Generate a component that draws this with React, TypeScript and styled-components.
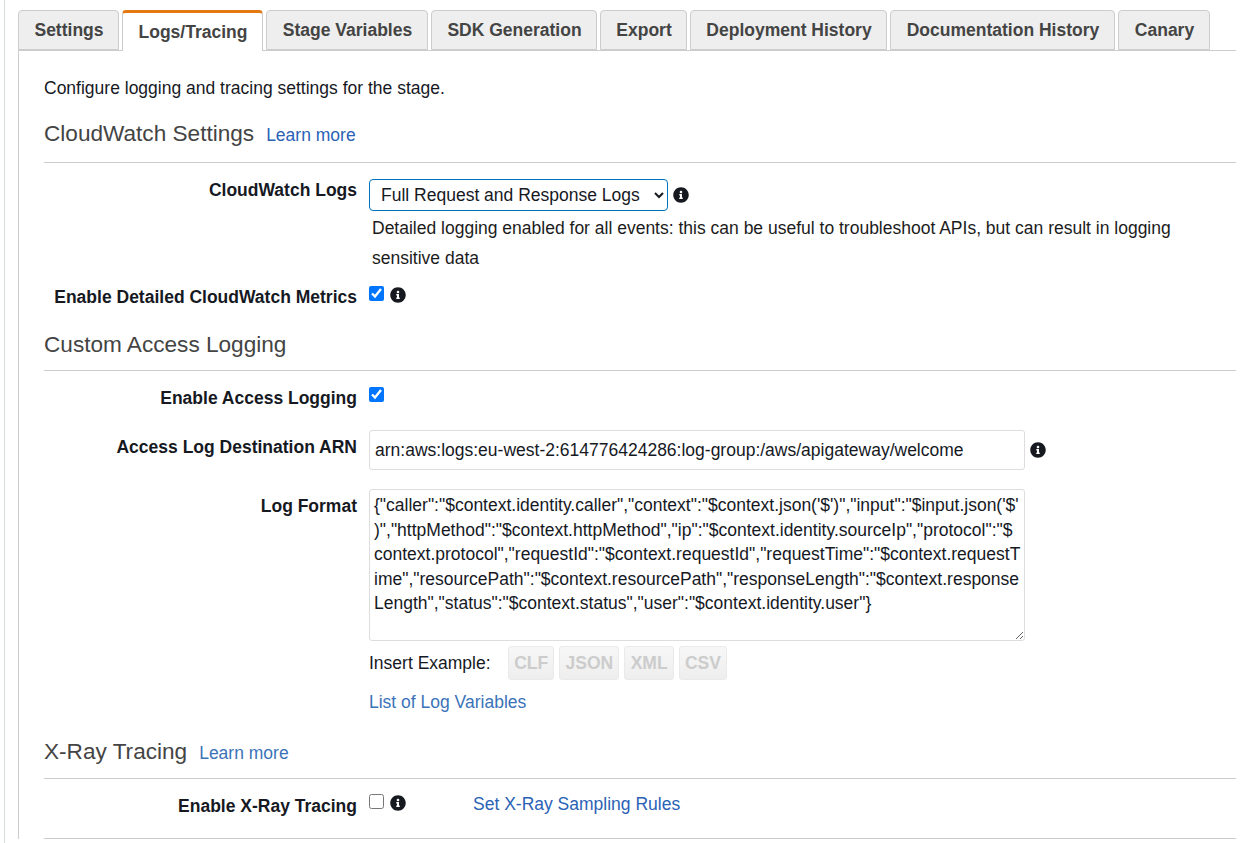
import styled, { createGlobalStyle } from "styled-components"
import { FaInfoCircle } from "react-icons/fa"

const TABS = [
   { label: "Settings", width: 101 },
   { label: "Logs/Tracing", width: 141, active: true },
   { label: "Stage Variables", width: 162 },
   { label: "SDK Generation", width: 166 },
   { label: "Export", width: 87 },
   { label: "Deployment History", width: 197 },
   { label: "Documentation History", width: 225 },
   { label: "Canary", width: 92 },
]

const LOG_FORMAT = `{"caller":"$context.identity.caller","context":"$context.json('$')","input":"$input.json('$')","httpMethod":"$context.httpMethod","ip":"$context.identity.sourceIp","protocol":"$context.protocol","requestId":"$context.requestId","requestTime":"$context.requestTime","resourcePath":"$context.resourcePath","responseLength":"$context.responseLength","status":"$context.status","user":"$context.identity.user"}`

export default function App() {
   return (
      <>
         <GlobalStyle />
         <Page>
            <TabBar>
               {TABS.map(tab => (
                  <Tab key={tab.label} $active={tab.active} $width={tab.width}>{tab.label}</Tab>
               ))}
            </TabBar>
            <Panel>
               <Intro>Configure logging and tracing settings for the stage.</Intro>

               <SectionTitle $top={21} $height={42}>
                  <Heading>CloudWatch Settings</Heading>
                  <LearnMore href="#">Learn more</LearnMore>
               </SectionTitle>
               <FormRow $top={16}>
                  <Label $top={0}>CloudWatch Logs</Label>
                  <Control>
                     <InlineGroup>
                        <LogSelect defaultValue="full">
                           <option value="full">Full Request and Response Logs</option>
                        </LogSelect>
                        <Info />
                     </InlineGroup>
                     <Hint>
                        Detailed logging enabled for all events: this can be useful to troubleshoot APIs, but can result in logging sensitive data
                     </Hint>
                  </Control>
               </FormRow>
               <FormRow $top={5}>
                  <Label $top={8}>Enable Detailed CloudWatch Metrics</Label>
                  <CheckGroup>
                     <Check type="checkbox" defaultChecked />
                     <CheckInfo />
                  </CheckGroup>
               </FormRow>

               <SectionTitle $top={23} $height={39}>
                  <Heading>Custom Access Logging</Heading>
               </SectionTitle>
               <FormRow $top={8}>
                  <Label $top={8}>Enable Access Logging</Label>
                  <CheckGroup>
                     <Check type="checkbox" defaultChecked />
                  </CheckGroup>
               </FormRow>
               <FormRow $top={21}>
                  <Label $top={6}>Access Log Destination ARN</Label>
                  <InlineGroup>
                     <ArnInput readOnly value="arn:aws:logs:eu-west-2:614776424286:log-group:/aws/apigateway/welcome" />
                     <Info />
                  </InlineGroup>
               </FormRow>
               <FormRow $top={19}>
                  <Label $top={6}>Log Format</Label>
                  <Control>
                     <FormatArea readOnly value={LOG_FORMAT} />
                     <ExampleRow>
                        <ExampleLabel>Insert Example:</ExampleLabel>
                        <ExampleButton disabled>CLF</ExampleButton>
                        <ExampleButton disabled>JSON</ExampleButton>
                        <ExampleButton disabled>XML</ExampleButton>
                        <ExampleButton disabled>CSV</ExampleButton>
                     </ExampleRow>
                     <VariablesLink href="#">List of Log Variables</VariablesLink>
                  </Control>
               </FormRow>

               <SectionTitle $top={25} $height={40}>
                  <Heading>X-Ray Tracing</Heading>
                  <LearnMore href="#" $soft>Learn more</LearnMore>
               </SectionTitle>
               <FormRow $top={7}>
                  <Label $top={9}>Enable X-Ray Tracing</Label>
                  <CheckGroup>
                     <Check type="checkbox" />
                     <CheckInfo />
                     <SamplingLink href="#">Set X-Ray Sampling Rules</SamplingLink>
                  </CheckGroup>
               </FormRow>
               <BottomRule />
            </Panel>
         </Page>
      </>
   )
}

const GlobalStyle = createGlobalStyle`
   html, body {
      margin: 0;
      height: 843px;
      overflow: hidden;
      background: #fff;
   }

   body {
      font-family: "Liberation Sans", Arial, sans-serif;
      font-size: 16px;
      color: #16191f;
   }
`

const Page = styled.div`
   width: 1244px;
   height: 843px;
   box-sizing: border-box;
   margin-left: 4px;
   padding: 10px 0 0 13px;
   border-left: 1px solid #d5dbdb;
   overflow: hidden;
`

const TabBar = styled.div`
   display: flex;
   gap: 3px;
   height: 41px;
   box-sizing: border-box;
   width: 1218px;
   border-bottom: 1px solid #ccc;
`

const Tab = styled.div<{ $active?: boolean, $width: number }>`
   width: ${({ $width }) => $width}px;
   height: ${({ $active }) => $active ? 41 : 40}px;
   box-sizing: border-box;
   display: flex;
   align-items: center;
   justify-content: center;
   padding-left: 1px;
   font-weight: 700;
   font-size: 17.5px;
   color: #444;
   border: 1px solid #ccc;
   border-bottom: ${({ $active }) => $active ? "none" : "1px solid #ccc"};
   border-top: ${({ $active }) => $active ? "3px solid #e47911" : "1px solid #ccc"};
   border-radius: 4px 4px 0 0;
   background: ${({ $active }) => $active ? "#fff" : "#eee"};
`

const Panel = styled.div`
   width: 1218px;
   box-sizing: border-box;
   padding: 26px 0 0 25px;
   border-left: 1px solid #ccc;
`

const Intro = styled.div`
   line-height: 22px;
   font-size: 17.5px;
`

const SectionTitle = styled.div<{ $top: number, $height: number }>`
   display: flex;
   align-items: baseline;
   gap: 12px;
   margin-top: ${({ $top }) => $top}px;
   height: ${({ $height }) => $height}px;
   border-bottom: 1px solid #ccc;
`

const Heading = styled.h3`
   margin: 0;
   font-weight: 400;
   font-size: 22.6px;
   line-height: 28px;
   color: #444;
`

const LearnMore = styled.a<{ $soft?: boolean }>`
   font-size: 17.5px;
   color: ${({ $soft }) => $soft ? "#3b73b9" : "#2a62b5"};
   text-decoration: none;
`

const FormRow = styled.div<{ $top: number }>`
   display: grid;
   grid-template-columns: 313px 1fr;
   column-gap: 12px;
   margin-top: ${({ $top }) => $top}px;
`

const Label = styled.label<{ $top: number }>`
   text-align: right;
   font-weight: 700;
   font-size: 17.5px;
   line-height: 22px;
   padding-top: ${({ $top }) => $top}px;
   white-space: nowrap;
`

const Control = styled.div`
   display: flex;
   flex-direction: column;
   align-items: flex-start;
`

const InlineGroup = styled.div`
   display: flex;
   align-items: center;
   gap: 5px;
`

const CheckGroup = styled.div`
   display: flex;
   align-items: center;
   gap: 6px;
   height: 30px;
`

const LogSelect = styled.select`
   width: 299px;
   height: 32px;
   padding: 0 0 0 7px;
   font-family: inherit;
   font-size: 17.5px;
   color: #16191f;
   background: #fff;
   border: 1px solid #0073bb;
   border-radius: 4px;
`

const Info = styled(FaInfoCircle)`
   width: 16px;
   height: 16px;
   color: #16191f;
`

const CheckInfo = styled(Info)`
   margin-top: 3px;
`

const Hint = styled.div`
   width: 840px;
   margin: 2px 0 0 3px;
   line-height: 30px;
   font-size: 17.5px;
   color: #1c1c1c;
`

const Check = styled.input`
   width: 15px;
   height: 15px;
   margin: 0;
`

const ArnInput = styled.input`
   width: 656px;
   height: 40px;
   box-sizing: border-box;
   padding: 0 5px;
   font-family: inherit;
   font-size: 17.5px;
   color: #16191f;
   border: 1px solid #ddd;
   border-radius: 3px;
   outline: none;
`

const FormatArea = styled.textarea`
   width: 656px;
   height: 152px;
   box-sizing: border-box;
   padding: 3px 3.5px 3px 4px;
   font-family: inherit;
   font-size: 17.5px;
   line-height: 24.5px;
   color: #16191f;
   border: 1px solid #ddd;
   border-radius: 3px;
   outline: none;
`

const ExampleRow = styled.div`
   display: flex;
   align-items: center;
   gap: 5px;
   margin-top: 5px;
`

const ExampleLabel = styled.span`
   width: 134px;
   font-size: 17.5px;
`

const ExampleButton = styled.button`
   height: 34px;
   padding: 0 5.2px;
   font-family: inherit;
   font-weight: 700;
   font-size: 17.5px;
   color: #ccc;
   background: linear-gradient(#f7f7f7, #eee);
   border: 1px solid #eaeaea;
   border-radius: 3px;
`

const VariablesLink = styled.a`
   margin-top: 11px;
   line-height: 22px;
   font-size: 17.5px;
   color: #3b73b9;
   text-decoration: none;
`

const SamplingLink = styled.a`
   margin-left: 61px;
   padding-top: 6px;
   font-size: 17.5px;
   color: #2a62b5;
   text-decoration: none;
`

const BottomRule = styled.div`
   margin-top: 21px;
   border-bottom: 1px solid #ccc;
   width: 1192px;
`
